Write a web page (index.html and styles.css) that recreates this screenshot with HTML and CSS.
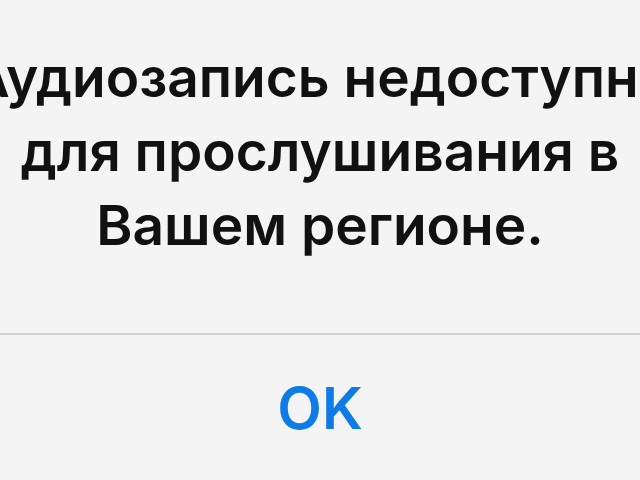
FILE: index.html
```html
<!DOCTYPE html>
<html lang="ru">
<head>
    <meta charset="UTF-8">
    <meta name="viewport" content="width=device-width, initial-scale=1.0">
    <title>Alert</title>
    <link rel="stylesheet" href="styles.css">
</head>
<body>
    <div class="alert">
        <div class="alert-message">
            <span>Аудиозапись недоступна</span>
            <span>для прослушивания в</span>
            <span>Вашем регионе.</span>
        </div>
        <div class="alert-actions">
            <button type="button" class="alert-button">OK</button>
        </div>
    </div>
</body>
</html>
```

FILE: styles.css
```css
body {
    margin: 0;
    padding: 0;
    background-color: #f4f4f4;
    font-family: Inter, "Noto Sans", sans-serif;
    overflow: hidden;
}

.alert {
    width: 640px;
    height: 480px;
    display: flex;
    flex-direction: column;
}

.alert-message {
    display: flex;
    flex-direction: column;
    align-items: center;
    padding: 40px 0 71px;
    font-size: 55px;
    font-weight: 600;
    line-height: 74px;
    color: #111;
    white-space: nowrap;
    border-bottom: 2px solid #d2d2d2;
}

.alert-actions {
    flex: 1;
    display: flex;
    align-items: center;
    justify-content: center;
}

.alert-button {
    background: none;
    border: none;
    padding: 0;
    font-family: inherit;
    font-size: 58px;
    font-weight: 600;
    color: #0f7be6;
    cursor: pointer;
}
```
